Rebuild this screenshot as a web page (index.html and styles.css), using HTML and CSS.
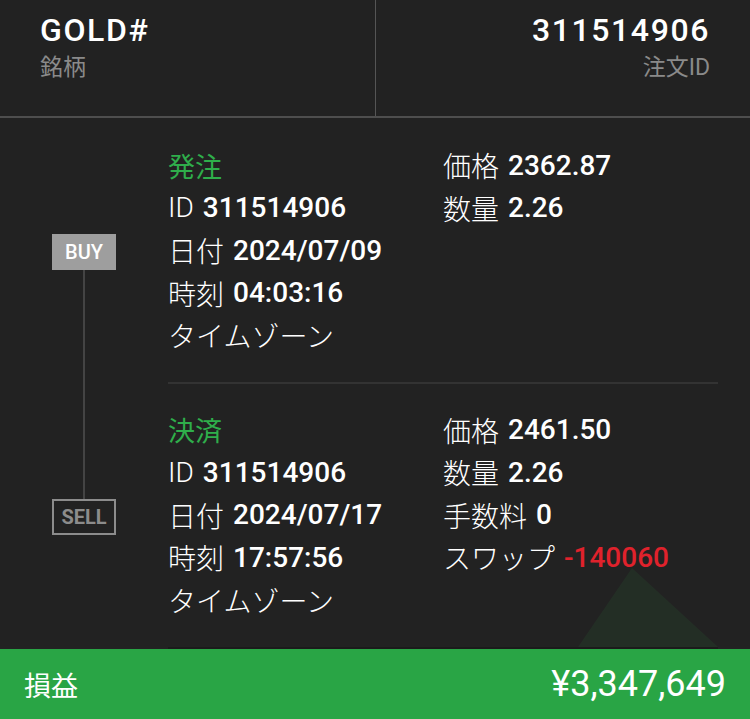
FILE: index.html
```html
<!DOCTYPE html>
<html lang="ja">
<head>
	<meta charset="UTF-8">
	<title>注文詳細</title>
	<link rel="stylesheet" href="styles.css">
</head>
<body>
	<div class="page">
		<header class="head">
			<div class="head-cell">
				<div class="head-val">GOLD#</div>
				<div class="head-lbl">銘柄</div>
			</div>
			<div class="head-cell right">
				<div class="head-val">311514906</div>
				<div class="head-lbl">注文ID</div>
			</div>
		</header>

		<section class="deal first">
			<div class="rail">
				<span class="side buy">BUY</span>
				<span class="rail-line"></span>
			</div>
			<div class="deal-body">
				<div class="col">
					<div class="row title">発注</div>
					<div class="row"><span class="lbl">ID</span><span class="val">311514906</span></div>
					<div class="row"><span class="lbl">日付</span><span class="val">2024/07/09</span></div>
					<div class="row"><span class="lbl">時刻</span><span class="val">04:03:16</span></div>
					<div class="row"><span class="lbl">タイムゾーン</span></div>
				</div>
				<div class="col">
					<div class="row"><span class="lbl">価格</span><span class="val">2362.87</span></div>
					<div class="row"><span class="lbl">数量</span><span class="val">2.26</span></div>
				</div>
			</div>
		</section>

		<section class="deal second">
			<div class="rail">
				<span class="rail-line top"></span>
				<span class="side sell">SELL</span>
			</div>
			<div class="deal-body">
				<div class="col">
					<div class="row title">決済</div>
					<div class="row"><span class="lbl">ID</span><span class="val">311514906</span></div>
					<div class="row"><span class="lbl">日付</span><span class="val">2024/07/17</span></div>
					<div class="row"><span class="lbl">時刻</span><span class="val">17:57:56</span></div>
					<div class="row"><span class="lbl">タイムゾーン</span></div>
				</div>
				<div class="col">
					<div class="row"><span class="lbl">価格</span><span class="val">2461.50</span></div>
					<div class="row"><span class="lbl">数量</span><span class="val">2.26</span></div>
					<div class="row"><span class="lbl">手数料</span><span class="val">0</span></div>
					<div class="row"><span class="lbl">スワップ</span><span class="val minus">-140060</span></div>
				</div>
			</div>
			<svg class="mark" width="140" height="79" viewBox="0 0 140 79">
				<polygon points="54,0 0,79 140,79" fill="rgba(46,160,67,0.1)"/>
			</svg>
		</section>

		<footer class="pl">
			<span class="pl-lbl">損益</span>
			<span class="pl-val">¥3,347,649</span>
		</footer>
	</div>
</body>
</html>
```

FILE: styles.css
```css
html,body{margin:0;padding:0;background:#222;}
body{font-family:Roboto,"Noto Sans CJK JP",sans-serif;color:#fff;}
.page{width:750px;height:719px;overflow:hidden;}

.head{display:grid;grid-template-columns:375px 375px;height:116px;border-bottom:2px solid #4e4e4e;}
.head-cell{padding:11px 40px 0 40px;}
.head-cell.right{border-left:1px solid #555;text-align:right;}
.head-val{font-size:32px;line-height:38px;font-weight:500;letter-spacing:1.6px;}
.head-lbl{margin-top:4px;font-size:23px;line-height:30px;color:#8a8a8a;}

.deal{position:relative;display:grid;grid-template-columns:168px 1fr;}
.rail{display:flex;flex-direction:column;align-items:center;}
.first .rail{padding-top:116px;}
.rail-line{flex:1;width:2px;background:#444;}
.rail-line.top{flex:none;height:115px;}
.side{box-sizing:border-box;width:64px;height:36px;line-height:36px;text-align:center;font-size:20px;font-weight:500;}
.buy{background:#9e9e9e;color:#fff;}
.sell{border:2px solid #8c8c8c;line-height:32px;color:#8c8c8c;font-weight:700;}

.deal-body{display:grid;grid-template-columns:275px 1fr;margin-right:32px;border-bottom:2px solid #333;}
.first .deal-body{padding:26px 0 25.5px;}
.second .deal-body{padding:24.5px 0 26px;border-bottom-color:#1b1b1b;}
.row{display:flex;align-items:center;height:42.5px;font-size:28px;white-space:nowrap;}
.row.title{color:#2fae4b;font-size:27px;}
.lbl{font-weight:300;margin-right:9px;}
.val{font-weight:500;}
.val.minus{color:#e0222c;}

.mark{position:absolute;left:578px;top:184px;}

.pl{display:flex;justify-content:space-between;align-items:center;height:70px;padding:0 24px;background:#29a545;}
.pl-lbl{font-size:27px;}
.pl-val{font-size:36px;}
```
